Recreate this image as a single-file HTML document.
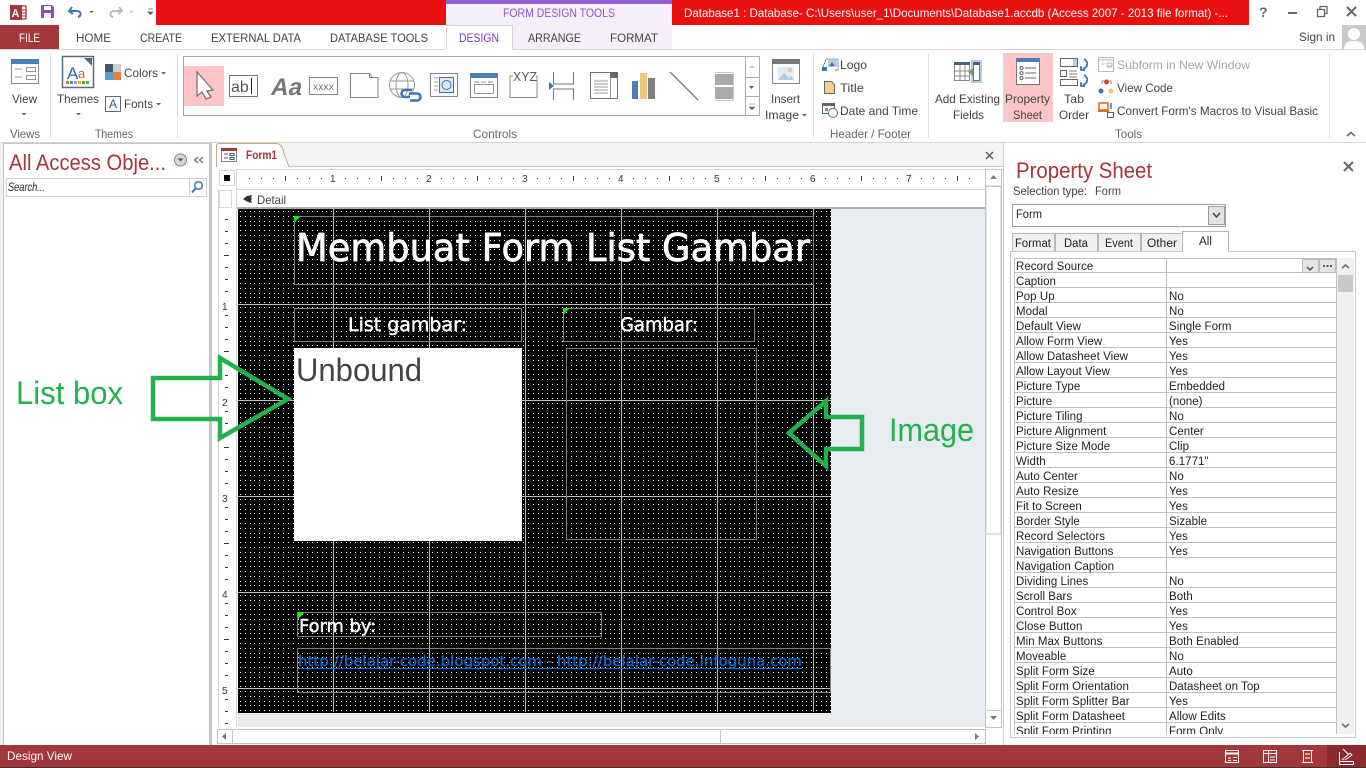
<!DOCTYPE html>
<html><head><meta charset="utf-8"><title>Access</title>
<style>
html,body{margin:0;padding:0;width:1366px;height:768px;overflow:hidden;background:#fff}
svg{display:block}
text{font-family:"Liberation Sans",sans-serif;font-size:12px;fill:#444}
.c{font-family:"DejaVu Sans",sans-serif;fill:#fff;stroke:#fff;stroke-width:.45}
.p{fill:#222;font-size:11.5px;letter-spacing:.05px}
.l{fill:#666}
.n{fill:none;stroke:#777;stroke-width:1}
</style></head><body>
<svg width="1366" height="768" viewBox="0 0 1366 768" xmlns="http://www.w3.org/2000/svg">
<defs>
<pattern id="dots" x="238" y="209" width="24" height="24" patternUnits="userSpaceOnUse">
<rect width="24" height="24" fill="#000"/>
<g fill="#fff" shape-rendering="crispEdges">
<rect x="2" y="2" width="1" height="1"/><rect x="7" y="2" width="1" height="1"/><rect x="12" y="2" width="1" height="1"/><rect x="16" y="2" width="1" height="1"/><rect x="21" y="2" width="1" height="1"/>
<rect x="2" y="7" width="1" height="1"/><rect x="7" y="7" width="1" height="1"/><rect x="12" y="7" width="1" height="1"/><rect x="16" y="7" width="1" height="1"/><rect x="21" y="7" width="1" height="1"/>
<rect x="2" y="12" width="1" height="1"/><rect x="7" y="12" width="1" height="1"/><rect x="12" y="12" width="1" height="1"/><rect x="16" y="12" width="1" height="1"/><rect x="21" y="12" width="1" height="1"/>
<rect x="2" y="16" width="1" height="1"/><rect x="7" y="16" width="1" height="1"/><rect x="12" y="16" width="1" height="1"/><rect x="16" y="16" width="1" height="1"/><rect x="21" y="16" width="1" height="1"/>
<rect x="2" y="21" width="1" height="1"/><rect x="7" y="21" width="1" height="1"/><rect x="12" y="21" width="1" height="1"/><rect x="16" y="21" width="1" height="1"/><rect x="21" y="21" width="1" height="1"/>
</g>
</pattern>
<clipPath id="pc"><rect x="1014" y="258" width="340" height="476"/></clipPath>
</defs>

<!-- title bar -->
<rect x="156" y="0" width="1093" height="25" fill="#eb1010"/>
<rect x="446" y="0" width="226" height="25" fill="#f4effb"/>
<rect x="446" y="0" width="226" height="4" fill="#9160d2"/>
<text x="503" y="17" textLength="112" lengthAdjust="spacingAndGlyphs" font-size="12" style="fill:#8a55d0">FORM DESIGN TOOLS</text>
<text x="684" y="17" textLength="544" lengthAdjust="spacingAndGlyphs" style="fill:#fff">Database1 : Database- C:\Users\user_1\Documents\Database1.accdb (Access 2007 - 2013 file format) -...</text>
<!-- access logo -->
<path d="M18 6h8v13h-8z" fill="#fff" stroke="#a4373a" stroke-width="1.300"/><path d="M19 10h7M19 13h7M19 16h7" stroke="#a4373a"/>
<rect x="10" y="5" width="12" height="15" fill="#a4373a"/>
<text x="11.500" y="17" style="fill:#fff;font-size:11px;font-weight:bold">A</text>
<!-- save -->
<path d="M41 5h11l2 2v11H41z" fill="#8a55b0"/><rect x="44" y="6" width="7" height="4" fill="#fff"/><rect x="44" y="13" width="7" height="5" fill="#f4effb"/>
<!-- undo redo -->
<path d="M72 7l-3 4 4 3M70 11h7c4 0 5 5 1 6" fill="none" stroke="#3a76b4" stroke-width="2"/>
<path d="M89 11h5l-2.500 2z" fill="#666"/>
<path d="M119 7l3 4-4 3M121 11h-7c-4 0-5 5-1 6" fill="none" stroke="#bbb" stroke-width="2"/>
<path d="M129 11h5l-2.500 2z" fill="#bbb"/>
<path d="M148 9h5M148 12h5l-2.500 2.500z" fill="#666" stroke="#666" stroke-width=".8"/>
<!-- window controls -->
<text x="1259" y="17" style="font-size:14px;font-weight:bold;fill:#666">?</text>
<rect x="1288" y="12" width="9" height="2" fill="#666"/>
<path d="M1317.500 9.500h7v7h-7zM1320 9v-2.500h7v7h-2" fill="none" stroke="#666" stroke-width="1.300"/>
<path d="M1347 7l9 9M1356 7l-9 9" stroke="#666" stroke-width="2"/>

<!-- tabs -->
<rect x="0" y="25" width="59" height="25" fill="#a4373a"/>
<text x="19" y="42" textLength="21" lengthAdjust="spacingAndGlyphs" style="fill:#fff">FILE</text>
<rect x="512" y="25" width="160" height="24" fill="#f4effb"/>
<path d="M446.500 25v24" stroke="#d4d4d4" fill="none"/>
<path d="M0 49.500h446.500M512.500 49.500H1366" stroke="#d4d4d4" fill="none"/>
<path d="M512.500 25v25M446.500 25.500h66" stroke="#d4d4d4" fill="none"/>
<text x="76" y="42" textLength="35" lengthAdjust="spacingAndGlyphs">HOME</text>
<text x="140" y="42" textLength="42" lengthAdjust="spacingAndGlyphs">CREATE</text>
<text x="211" y="42" textLength="90" lengthAdjust="spacingAndGlyphs">EXTERNAL DATA</text>
<text x="330" y="42" textLength="98" lengthAdjust="spacingAndGlyphs">DATABASE TOOLS</text>
<text x="459" y="42" textLength="40" lengthAdjust="spacingAndGlyphs" style="fill:#7a3fc4">DESIGN</text>
<text x="528" y="42" textLength="53" lengthAdjust="spacingAndGlyphs">ARRANGE</text>
<text x="610" y="42" textLength="48" lengthAdjust="spacingAndGlyphs">FORMAT</text>
<text x="1299" y="41" textLength="36" lengthAdjust="spacingAndGlyphs">Sign in</text>
<rect x="1342" y="25" width="24" height="24" fill="#c9c9c9"/>
<circle cx="1354" cy="34" r="6" fill="#fff"/><path d="M1344 49c0-7 5-8 10-8s10 1 10 8z" fill="#fff"/>

<!-- ribbon -->
<path d="M0 142.500h1366" stroke="#d4d4d4" fill="none"/>
<path d="M50.500 54v84M177.500 54v84M813.500 54v84M928.500 54v84M1329.500 54v84" stroke="#e2e2e2" fill="none"/>
<!-- view -->
<rect x="11.500" y="59.500" width="27" height="24" fill="#fff" stroke="#888"/><rect x="11" y="59" width="28" height="5" fill="#4a7fb8"/>
<path d="M15 69h7M15 77h7M26.500 67.500h9v4h-9zM26.500 75.500h9v4h-9z" fill="none" stroke="#999"/>
<text x="12" y="103" textLength="25" lengthAdjust="spacingAndGlyphs">View</text>
<path d="M21.500 113h5l-2.500 2.500z" fill="#666"/>
<text x="10" y="138" textLength="30" lengthAdjust="spacingAndGlyphs" class="l">Views</text>
<!-- themes -->
<rect x="62.500" y="56.500" width="31" height="31" fill="#fff" stroke="#5a6a80" stroke-width="1.500"/>
<path d="M84 58h8v8z" fill="#5a6a80"/>
<text x="67" y="79" style="font-size:17px;fill:#2a6ab0">A</text><text x="78" y="78" style="font-size:13px;fill:#c8641e">a</text>
<g><rect x="66" y="81" width="3" height="3" fill="#e07020"/><rect x="70" y="81" width="3" height="3" fill="#4a90d0"/><rect x="74" y="81" width="3" height="3" fill="#a0a0a0"/><rect x="78" y="81" width="3" height="3" fill="#f0b020"/><rect x="82" y="81" width="3" height="3" fill="#70a040"/><rect x="86" y="81" width="3" height="3" fill="#60a050"/></g>
<text x="57" y="103" textLength="42" lengthAdjust="spacingAndGlyphs">Themes</text>
<path d="M76 113h5l-2.500 2.500z" fill="#666"/>
<rect x="105" y="64" width="8" height="8" fill="#44546a"/><rect x="113" y="64" width="8" height="8" fill="#d0d0d0"/><rect x="105" y="72" width="8" height="8" fill="#5b9bd5"/><rect x="113" y="72" width="8" height="8" fill="#ed7d31"/>
<text x="124" y="77" textLength="34" lengthAdjust="spacingAndGlyphs">Colors</text><path d="M161 72h5l-2.500 2.500z" fill="#666"/>
<rect x="105.500" y="96.500" width="15" height="15" fill="#fff" stroke="#5a6a80"/><text x="109" y="108" style="font-size:12px;fill:#2a5a90">A</text>
<text x="124" y="108" textLength="29" lengthAdjust="spacingAndGlyphs">Fonts</text><path d="M156 103h5l-2.500 2.500z" fill="#666"/>
<text x="95" y="138" textLength="38" lengthAdjust="spacingAndGlyphs" class="l">Themes</text>

<!-- gallery -->
<rect x="183.500" y="56.500" width="576" height="59" fill="#fff" stroke="#ababab"/>
<rect x="184" y="66" width="40" height="40" fill="#fec5c6"/>
<path d="M197 72v24l5-4 4 7 5-2-4-6 6-1z" fill="#fff" stroke="#777" stroke-width="1.300"/>
<rect x="229.500" y="75.500" width="28" height="21" fill="#fff" stroke="#777"/><text x="231" y="92" style="font-size:16px;fill:#555">ab</text><path d="M251.500 78v16" stroke="#222"/>
<text transform="translate(270 95) skewX(-12)" x="0" y="0" style="font-size:24px;font-weight:bold;fill:#777">Aa</text>
<rect x="309.500" y="77.500" width="28" height="17" fill="#fff" stroke="#888"/><text x="313" y="90" textLength="21" lengthAdjust="spacingAndGlyphs" style="font-size:10px;fill:#777">xxxx</text>
<path d="M350.500 97.500v-24h19l3 4h5.500v20zM369.500 73.500v4h8" fill="#fff" stroke="#888"/>
<circle cx="402" cy="85" r="12.500" fill="#fff" stroke="#999"/><ellipse cx="402" cy="85" rx="6" ry="12.500" fill="none" stroke="#999"/><path d="M390 81h24M390 89h24" stroke="#999" fill="none"/>
<path d="M410 97h-5a3.500 3.500 0 0 1 0-7h7M409 93.500h8a3.500 3.500 0 0 1 0 7h-7" fill="none" stroke="#3a76b4" stroke-width="2.500"/>
<rect x="430.500" y="73.500" width="27" height="23" fill="#fff" stroke="#888"/><rect x="439.500" y="77.500" width="14" height="15" fill="#dce8f4" stroke="#3a76b4"/><circle cx="446.500" cy="85" r="4.500" fill="none" stroke="#3a76b4"/><path d="M434 78h4M434 82h4M434 86h4M434 90h4" stroke="#999"/>
<rect x="470.500" y="73.500" width="27" height="24" fill="#fff" stroke="#888"/><rect x="470" y="73" width="28" height="5" fill="#4a7fb8"/><path d="M474 82h20" stroke="#999" stroke-dasharray="5 2"/><rect x="474.500" y="84.500" width="19" height="9" fill="none" stroke="#999"/>
<path d="M513 76h-3v21.500h27V76h-1" fill="none" stroke="#888"/><text x="513" y="81" textLength="24" lengthAdjust="spacingAndGlyphs" style="font-size:13px;fill:#555">XYZ</text>
<path d="M553.500 72v12h20V72M553.500 100V89h20v11" fill="none" stroke="#777"/><path d="M549 82l5 4-5 4z" fill="#3a76b4"/>
<rect x="590.500" y="72.500" width="27" height="26" fill="#fff" stroke="#777"/><rect x="610" y="72" width="8" height="6" fill="#666"/><path d="M610.500 78v20M594 81h14M594 84h14M594 87h14M594 90h14M594 93h14" stroke="#999" fill="none"/>
<rect x="632" y="81" width="6" height="18" fill="#4a7fb8"/><rect x="640" y="73" width="7" height="26" fill="#eac77d"/><rect x="648" y="78" width="7" height="21" fill="#808080"/>
<path d="M670 72l28 28" stroke="#666" stroke-width="1.200"/>
<rect x="715" y="74" width="18" height="11" fill="#aaa"/><rect x="715" y="87" width="18" height="12" fill="#aaa"/><path d="M714.500 72.500h19v28h-19" fill="none" stroke="#ccc"/>
<path d="M745.500 56v59M745.500 77.500h14M745.500 96.500h14" stroke="#ababab" fill="none"/>
<path d="M749 68l3-3 3 3z" fill="#ccc"/><path d="M749 86h5l-2.500 3z" fill="#666"/><path d="M749 104h6M749 107h6l-3 3z" fill="#666" stroke="#666" stroke-width=".5"/>
<text x="473" y="138" textLength="44" lengthAdjust="spacingAndGlyphs" class="l">Controls</text>
<!-- insert image -->
<rect x="772.500" y="59.500" width="27" height="24" fill="#fff" stroke="#888"/><rect x="772" y="59" width="28" height="5" fill="#777"/>
<rect x="778" y="67" width="16" height="13" fill="#e2ebf3"/><circle cx="790" cy="70" r="2" fill="#eac77d"/><path d="M778 80l6-7 5 5 2-2 3 4z" fill="#b4cbe0"/>
<text x="771" y="103" textLength="29" lengthAdjust="spacingAndGlyphs">Insert</text>
<text x="765" y="119" textLength="34" lengthAdjust="spacingAndGlyphs">Image</text><path d="M802 114h5l-2.500 2.500z" fill="#666"/>
<!-- header/footer -->
<path d="M822 70l4-11h12v11l-4 0" fill="#fff" stroke="#666" stroke-dasharray="2 1"/><rect x="828" y="59" width="10" height="8" fill="#b4cbe0"/><path d="M829 66l3-4 3 4z" fill="#3a76b4"/><rect x="822" y="67" width="5" height="4" fill="#3a76b4"/>
<text x="840" y="69" textLength="27" lengthAdjust="spacingAndGlyphs">Logo</text>
<path d="M824.500 81.500h7l3 3v9h-10z" fill="#f3cf8f" stroke="#666"/>
<text x="840" y="92" textLength="24" lengthAdjust="spacingAndGlyphs">Title</text>
<rect x="822.500" y="103.500" width="12" height="10" fill="#fff" stroke="#666"/><rect x="822" y="103" width="13" height="3" fill="#666"/><rect x="825" y="108" width="3" height="3" fill="#e07020"/><circle cx="833" cy="113" r="4.500" fill="#fff" stroke="#3a76b4"/>
<text x="840" y="115" textLength="78" lengthAdjust="spacingAndGlyphs">Date and Time</text>
<text x="830" y="138" textLength="81" lengthAdjust="spacingAndGlyphs" class="l">Header / Footer</text>
<!-- tools -->
<rect x="954.500" y="62.500" width="15" height="18" fill="#fff" stroke="#888"/><rect x="954" y="62" width="16" height="3" fill="#44618a"/><path d="M954 71h16M954 76h16M960 65v16M965 65v16" stroke="#888" fill="none"/>
<rect x="971" y="60" width="11" height="23" fill="#b4cbe0"/><rect x="973.500" y="62.500" width="6" height="18" fill="#fff" stroke="#777"/><rect x="973" y="62" width="7" height="3" fill="#44618a"/>
<path d="M973 68l-5 4 5 4z" fill="#70a080"/>
<text x="935" y="103" textLength="65" lengthAdjust="spacingAndGlyphs">Add Existing</text>
<text x="953" y="119" textLength="31" lengthAdjust="spacingAndGlyphs">Fields</text>
<rect x="1003" y="53" width="50" height="69" fill="#fec5c6"/>
<rect x="1016.500" y="58.500" width="23" height="26" fill="#fff" stroke="#777"/><rect x="1016" y="58" width="24" height="4" fill="#4a7fb8"/>
<circle cx="1021.500" cy="68" r="1.500" fill="none" stroke="#666"/><circle cx="1021.500" cy="73" r="1.500" fill="none" stroke="#666"/><circle cx="1021.500" cy="78" r="1.500" fill="none" stroke="#666"/><path d="M1025 68h11M1025 73h11M1025 78h11" stroke="#666" fill="none"/>
<text x="1005" y="103" textLength="45" lengthAdjust="spacingAndGlyphs">Property</text>
<text x="1013" y="119" textLength="29" lengthAdjust="spacingAndGlyphs">Sheet</text>
<rect x="1060.500" y="58.500" width="17" height="8" fill="#fff" stroke="#666"/><rect x="1073" y="59" width="4" height="7" fill="#b4cbe0"/><rect x="1060.500" y="70.500" width="6" height="6" fill="#fff" stroke="#666"/><path d="M1069 71h8M1069 74h8M1069 77h8" stroke="#777"/><rect x="1060.500" y="79.500" width="17" height="6" fill="#fff" stroke="#666"/>
<path d="M1084 59c5 3 4 8-1 10M1081 66v4h4M1084 75c5 3 4 8-1 10M1081 82v4h4" fill="none" stroke="#3a76b4" stroke-width="1.800"/>
<text x="1064" y="103" textLength="20" lengthAdjust="spacingAndGlyphs">Tab</text>
<text x="1059" y="119" textLength="30" lengthAdjust="spacingAndGlyphs">Order</text>
<rect x="1098.500" y="57.500" width="15" height="14" fill="#fff" stroke="#bbb"/><path d="M1098 60h16M1101 64h4M1107 63h5v3h-5zM1107 67h5" stroke="#bbb" fill="none"/>
<text x="1117" y="69" textLength="133" lengthAdjust="spacingAndGlyphs" style="fill:#a6a6a6">Subform in New Window</text>
<path d="M1102 84v-3h9v3" fill="none" stroke="#888"/><circle cx="1106.500" cy="82" r="2.500" fill="#d0492a"/><circle cx="1101" cy="91" r="2.500" fill="#3a76b4"/><circle cx="1111" cy="91" r="2.500" fill="#eac77d"/>
<text x="1117" y="92" textLength="56" lengthAdjust="spacingAndGlyphs">View Code</text>
<rect x="1099" y="103" width="9" height="7" fill="none" stroke="#e07020" stroke-width="1.600"/><rect x="1098" y="110" width="11" height="2" fill="#e07020"/><rect x="1107.500" y="112.500" width="6" height="5" fill="#fff" stroke="#44618a"/><path d="M1111 103v6" stroke="#3a76b4" stroke-width="1.500"/>
<text x="1117" y="115" textLength="201" lengthAdjust="spacingAndGlyphs">Convert Form's Macros to Visual Basic</text>
<text x="1115" y="138" textLength="27" lengthAdjust="spacingAndGlyphs" class="l">Tools</text>
<path d="M1347 136l4-3.500 4 3.500" fill="none" stroke="#666" stroke-width="1.500"/>

<!-- nav pane -->
<rect x="0" y="143" width="1366" height="602" fill="#f1f1f1"/>
<rect x="3.500" y="143.500" width="206" height="602" fill="#fff" stroke="#c6c6c6"/>
<rect x="210" y="143" width="2" height="602" fill="#c6c6c6"/>
<rect x="212" y="143" width="4" height="602" fill="#fff"/>
<text x="9" y="170" textLength="157" lengthAdjust="spacingAndGlyphs" style="font-size:22px;fill:#a4373a">All Access Obje...</text>
<circle cx="180.500" cy="160" r="6" fill="#d8d8d8" stroke="#888"/><path d="M177.500 158.500h6l-3 3z" fill="#555"/>
<path d="M198 157l-3.500 3 3.500 3M203 157l-3.500 3 3.500 3" fill="none" stroke="#666" stroke-width="1.200"/>
<rect x="6.500" y="178.500" width="200" height="18" fill="#fff" stroke="#d0d0d0"/><path d="M189.500 178v18" stroke="#d0d0d0"/>
<text x="8" y="191" textLength="37" lengthAdjust="spacingAndGlyphs" style="font-style:italic;font-size:11.500px;fill:#222">Search...</text>
<circle cx="198.500" cy="185.500" r="3.800" fill="none" stroke="#3a76b4" stroke-width="1.500"/><path d="M195.500 188.500l-3.500 4" stroke="#3a76b4" stroke-width="2"/>

<!-- document area -->
<rect x="216" y="143" width="787" height="602" fill="#fff"/>
<rect x="216" y="143" width="787" height="24" fill="#f4f4f4"/>
<path d="M216 166.500h787" stroke="#c6c6c6" fill="none"/>
<path d="M216.500 167v-21q0-2.500 3-2.500h56c5 0 7 3 8.500 10l5 13.500" fill="#fff" stroke="#c0a888"/>
<rect x="221.500" y="148.500" width="15" height="13" fill="#fff" stroke="#888"/><rect x="221" y="148" width="16" height="3" fill="#a4373a"/><path d="M224 154h4M224 158h4M230 153.500h4v2h-4zM230 157.500h4v2h-4z" stroke="#44618a" fill="none"/>
<text x="246" y="159" textLength="31" lengthAdjust="spacingAndGlyphs" style="fill:#a4373a;font-weight:bold;font-size:11.500px">Form1</text>
<path d="M986 152l7 7M993 152l-7 7" stroke="#555" stroke-width="1.400"/>

<!-- ruler -->
<rect x="219.500" y="170.500" width="15" height="15" fill="#fff" stroke="#d6d6d6"/><rect x="224" y="175" width="6" height="6" fill="#000"/>
<rect x="236.500" y="169.500" width="749" height="20" fill="#fff" stroke="#d6d6d6"/>
<g fill="#444">
<rect x="249" y="178" width="1" height="1"/><rect x="261" y="178" width="1" height="1"/><rect x="273" y="178" width="1" height="1"/><rect x="285" y="176" width="1" height="5"/><rect x="297" y="178" width="1" height="1"/><rect x="309" y="178" width="1" height="1"/><rect x="321" y="178" width="1" height="1"/>
<rect x="345" y="178" width="1" height="1"/><rect x="357" y="178" width="1" height="1"/><rect x="369" y="178" width="1" height="1"/><rect x="381" y="176" width="1" height="5"/><rect x="393" y="178" width="1" height="1"/><rect x="405" y="178" width="1" height="1"/><rect x="417" y="178" width="1" height="1"/>
<rect x="441" y="178" width="1" height="1"/><rect x="453" y="178" width="1" height="1"/><rect x="465" y="178" width="1" height="1"/><rect x="477" y="176" width="1" height="5"/><rect x="489" y="178" width="1" height="1"/><rect x="501" y="178" width="1" height="1"/><rect x="513" y="178" width="1" height="1"/>
<rect x="537" y="178" width="1" height="1"/><rect x="549" y="178" width="1" height="1"/><rect x="561" y="178" width="1" height="1"/><rect x="573" y="176" width="1" height="5"/><rect x="585" y="178" width="1" height="1"/><rect x="597" y="178" width="1" height="1"/><rect x="609" y="178" width="1" height="1"/>
<rect x="633" y="178" width="1" height="1"/><rect x="645" y="178" width="1" height="1"/><rect x="657" y="178" width="1" height="1"/><rect x="669" y="176" width="1" height="5"/><rect x="681" y="178" width="1" height="1"/><rect x="693" y="178" width="1" height="1"/><rect x="705" y="178" width="1" height="1"/>
<rect x="729" y="178" width="1" height="1"/><rect x="741" y="178" width="1" height="1"/><rect x="753" y="178" width="1" height="1"/><rect x="765" y="176" width="1" height="5"/><rect x="777" y="178" width="1" height="1"/><rect x="789" y="178" width="1" height="1"/><rect x="801" y="178" width="1" height="1"/>
<rect x="825" y="178" width="1" height="1"/><rect x="837" y="178" width="1" height="1"/><rect x="849" y="178" width="1" height="1"/><rect x="861" y="176" width="1" height="5"/><rect x="873" y="178" width="1" height="1"/><rect x="885" y="178" width="1" height="1"/><rect x="897" y="178" width="1" height="1"/>
<rect x="921" y="178" width="1" height="1"/><rect x="933" y="178" width="1" height="1"/><rect x="945" y="178" width="1" height="1"/><rect x="957" y="176" width="1" height="5"/><rect x="969" y="178" width="1" height="1"/>
</g>
<text x="330" y="182" style="font-size:10px;fill:#333">1</text><text x="426" y="182" style="font-size:10px;fill:#333">2</text><text x="522" y="182" style="font-size:10px;fill:#333">3</text><text x="618" y="182" style="font-size:10px;fill:#333">4</text><text x="714" y="182" style="font-size:10px;fill:#333">5</text><text x="810" y="182" style="font-size:10px;fill:#333">6</text><text x="906" y="182" style="font-size:10px;fill:#333">7</text>
<!-- vertical ruler -->
<path d="M218.500 190v537" stroke="#d6d6d6" fill="none"/>
<rect x="219.500" y="190.500" width="12" height="17" fill="#fff" stroke="#d6d6d6"/>
<path d="M236.500 190v537" stroke="#d6d6d6"/>
<g fill="#333" transform="translate(0 1)">
<rect x="225" y="218" width="3" height="1"/><rect x="225" y="230" width="3" height="1"/><rect x="225" y="242" width="3" height="1"/><rect x="224" y="254" width="5" height="1"/><rect x="225" y="266" width="3" height="1"/><rect x="225" y="278" width="3" height="1"/><rect x="225" y="290" width="3" height="1"/>
<rect x="225" y="314" width="3" height="1"/><rect x="225" y="326" width="3" height="1"/><rect x="225" y="338" width="3" height="1"/><rect x="224" y="350" width="5" height="1"/><rect x="225" y="362" width="3" height="1"/><rect x="225" y="374" width="3" height="1"/><rect x="225" y="386" width="3" height="1"/>
<rect x="225" y="410" width="3" height="1"/><rect x="225" y="422" width="3" height="1"/><rect x="225" y="434" width="3" height="1"/><rect x="224" y="446" width="5" height="1"/><rect x="225" y="458" width="3" height="1"/><rect x="225" y="470" width="3" height="1"/><rect x="225" y="482" width="3" height="1"/>
<rect x="225" y="506" width="3" height="1"/><rect x="225" y="518" width="3" height="1"/><rect x="225" y="530" width="3" height="1"/><rect x="224" y="542" width="5" height="1"/><rect x="225" y="554" width="3" height="1"/><rect x="225" y="566" width="3" height="1"/><rect x="225" y="578" width="3" height="1"/>
<rect x="225" y="602" width="3" height="1"/><rect x="225" y="614" width="3" height="1"/><rect x="225" y="626" width="3" height="1"/><rect x="224" y="638" width="5" height="1"/><rect x="225" y="650" width="3" height="1"/><rect x="225" y="662" width="3" height="1"/><rect x="225" y="674" width="3" height="1"/>
<rect x="225" y="698" width="3" height="1"/><rect x="225" y="710" width="3" height="1"/><rect x="225" y="722" width="3" height="1"/>
</g>
<text x="222" y="310" style="font-size:10px;fill:#333">1</text><text x="222" y="406" style="font-size:10px;fill:#333">2</text><text x="222" y="502" style="font-size:10px;fill:#333">3</text><text x="222" y="598" style="font-size:10px;fill:#333">4</text><text x="222" y="694" style="font-size:10px;fill:#333">5</text>

<!-- detail band -->
<rect x="237" y="190" width="748" height="18" fill="#fff"/>
<path d="M243 199l4-3 5-1-1 3 1 1-1 1 1 3-4-1-2-1z" fill="#333"/>
<text x="257" y="204" textLength="29" lengthAdjust="spacingAndGlyphs">Detail</text>
<rect x="237" y="207" width="748" height="2" fill="#b0b0b0"/>
<!-- form surface -->
<rect x="238" y="209" width="747" height="518" fill="#e8ebf0"/>
<rect x="238" y="209" width="593" height="504" fill="url(#dots)"/>
<path d="M333.500 209v503M429.500 209v503M525.500 209v503M621.500 209v503M717.500 209v503M813.500 209v503M238 304.500h593M238 400.500h593M238 496.500h593M238 592.500h593M238 688.500h593" stroke="#bdbdbd" fill="none"/>
<!-- controls -->
<g fill="none" stroke="#808080">
<rect x="294.500" y="216.500" width="519" height="68"/>
<rect x="294.500" y="308.500" width="227" height="33"/>
<rect x="563.500" y="308.500" width="191" height="33"/>
<rect x="566.500" y="348.500" width="190" height="191"/>
<rect x="297.500" y="612.500" width="304" height="24"/>
<rect x="297.500" y="648.500" width="533" height="44"/>
</g>
<path d="M294 216h7l-7 7zM563 308h7l-7 7zM298 612h7l-7 7z" fill="#1fe81f"/>
<text class="c" x="296" y="261" textLength="514" lengthAdjust="spacingAndGlyphs" style="font-size:38px;stroke-width:.7">Membuat Form List Gambar</text>
<text class="c" x="348" y="331" textLength="119" lengthAdjust="spacingAndGlyphs" style="font-size:19px">List gambar:</text>
<text class="c" x="620" y="331" textLength="78" lengthAdjust="spacingAndGlyphs" style="font-size:19px">Gambar:</text>
<rect x="294" y="348" width="228" height="193" fill="#fff"/>
<text x="296" y="381" textLength="126" lengthAdjust="spacingAndGlyphs" style="font-size:32px;fill:#444">Unbound</text>
<text class="c" x="299" y="632" textLength="77" lengthAdjust="spacingAndGlyphs" style="font-size:18px">Form by:</text>
<text class="c" x="298" y="666" textLength="504" lengthAdjust="spacingAndGlyphs" style="font-size:14px;fill:#1166cc;stroke:#1166cc;stroke-width:.35">http://belajar-code.blogspot.com - http://belajar-code.infoguna.com</text>
<path d="M298 668.500h504" stroke="#1166cc" fill="none"/>

<!-- annotation arrows -->
<path d="M153 378H220V358L288 399 220 438V419H153z" fill="none" stroke="#22b14c" stroke-width="4.500" stroke-linejoin="miter"/>
<path d="M789 433L826 401V417H862V449H826V466z" fill="none" stroke="#22b14c" stroke-width="4.500"/>
<text x="16" y="404" textLength="107" lengthAdjust="spacingAndGlyphs" style="font-size:32px;fill:#22b14c">List box</text>
<text x="889" y="441" textLength="85" lengthAdjust="spacingAndGlyphs" style="font-size:32px;fill:#22b14c">Image</text>

<!-- scrollbars -->
<rect x="985.500" y="169.500" width="16" height="558" fill="#fff" stroke="#c6c6c6"/>
<rect x="986" y="186" width="15" height="348" fill="#fff" stroke="#c6c6c6"/>
<path d="M990 179l3.500-4 3.500 4z" fill="#777"/><path d="M990 716h7l-3.500 4z" fill="#777"/>
<path d="M986 169.500h15M986 186.500h15M986 710.500h15" stroke="#c6c6c6"/>
<rect x="217.500" y="729.500" width="768" height="14" fill="#fff" stroke="#c6c6c6"/>
<rect x="232.500" y="729.500" width="488" height="14" fill="#fff" stroke="#c6c6c6"/>
<path d="M226 733v7l-4-3.500z" fill="#777"/><path d="M975 733v7l4-3.500z" fill="#777"/>

<!-- property sheet pane -->
<rect x="1003" y="143" width="363" height="602" fill="#fff"/>
<path d="M1003.500 143v602" stroke="#d0d0d0"/>
<text x="1016" y="178" textLength="136" lengthAdjust="spacingAndGlyphs" style="font-size:22px;fill:#a4373a">Property Sheet</text>
<path d="M1344 162l9 9M1353 162l-9 9" stroke="#666" stroke-width="2"/>
<text x="1013" y="195" textLength="74" lengthAdjust="spacingAndGlyphs" style="font-size:11.500px">Selection type:</text>
<text x="1095" y="195" textLength="26" lengthAdjust="spacingAndGlyphs" style="font-size:11.500px">Form</text>
<rect x="1012.500" y="204.500" width="213" height="22" fill="#fff" stroke="#a0a0a0"/>
<text x="1016" y="218" textLength="26" lengthAdjust="spacingAndGlyphs" class="p">Form</text>
<rect x="1208.500" y="206.500" width="16" height="18" fill="#e4e4e4" stroke="#999"/><path d="M1213 213l3.500 4 3.500-4" fill="none" stroke="#444" stroke-width="1.500"/>
<g fill="#f0f0f0" stroke="#b8b8b8">
<rect x="1012.500" y="233.500" width="42" height="18"/><rect x="1055.500" y="233.500" width="42" height="18"/><rect x="1098.500" y="233.500" width="42" height="18"/><rect x="1141.500" y="233.500" width="41" height="18"/>
</g>
<rect x="1010.500" y="251.500" width="345" height="486" fill="#fff" stroke="#c8c8c8"/>
<path d="M1182.500 251.500v-20h46v20" fill="#fff" stroke="#b8b8b8"/><rect x="1183" y="250" width="45" height="3" fill="#fff"/>
<text x="1015" y="247" textLength="36" lengthAdjust="spacingAndGlyphs" class="p">Format</text>
<text x="1064" y="247" textLength="24" lengthAdjust="spacingAndGlyphs" class="p">Data</text>
<text x="1105" y="247" textLength="28" lengthAdjust="spacingAndGlyphs" class="p">Event</text>
<text x="1147" y="247" textLength="30" lengthAdjust="spacingAndGlyphs" class="p">Other</text>
<text x="1199" y="245" textLength="13" lengthAdjust="spacingAndGlyphs" class="p">All</text>
<!-- grid -->
<g clip-path="url(#pc)">
<g stroke="#c0c0c0" fill="none">
<path d="M1014.500 258v476M1166.500 258v476M1336.500 258v476"/>
<path d="M1014 258.500h323M1014 272.500h323M1014 287.500h323M1014 302.500h323M1014 317.500h323M1014 332.500h323M1014 347.500h323M1014 362.500h323M1014 377.500h323M1014 392.500h323M1014 407.500h323M1014 422.500h323M1014 437.500h323M1014 452.500h323M1014 467.500h323M1014 482.500h323M1014 497.500h323M1014 512.500h323M1014 527.500h323M1014 542.500h323M1014 557.500h323M1014 572.500h323M1014 587.500h323M1014 602.500h323M1014 617.500h323M1014 632.500h323M1014 647.500h323M1014 662.500h323M1014 677.500h323M1014 692.500h323M1014 707.500h323M1014 722.500h323"/>
</g>
<text class="p" x="1016" y="270">Record Source</text>
<text class="p" x="1016" y="285">Caption</text>
<text class="p" x="1016" y="300">Pop Up</text><text class="p" x="1169" y="300">No</text>
<text class="p" x="1016" y="315">Modal</text><text class="p" x="1169" y="315">No</text>
<text class="p" x="1016" y="330">Default View</text><text class="p" x="1169" y="330">Single Form</text>
<text class="p" x="1016" y="345">Allow Form View</text><text class="p" x="1169" y="345">Yes</text>
<text class="p" x="1016" y="360">Allow Datasheet View</text><text class="p" x="1169" y="360">Yes</text>
<text class="p" x="1016" y="375">Allow Layout View</text><text class="p" x="1169" y="375">Yes</text>
<text class="p" x="1016" y="390">Picture Type</text><text class="p" x="1169" y="390">Embedded</text>
<text class="p" x="1016" y="405">Picture</text><text class="p" x="1169" y="405">(none)</text>
<text class="p" x="1016" y="420">Picture Tiling</text><text class="p" x="1169" y="420">No</text>
<text class="p" x="1016" y="435">Picture Alignment</text><text class="p" x="1169" y="435">Center</text>
<text class="p" x="1016" y="450">Picture Size Mode</text><text class="p" x="1169" y="450">Clip</text>
<text class="p" x="1016" y="465">Width</text><text class="p" x="1169" y="465">6.1771"</text>
<text class="p" x="1016" y="480">Auto Center</text><text class="p" x="1169" y="480">No</text>
<text class="p" x="1016" y="495">Auto Resize</text><text class="p" x="1169" y="495">Yes</text>
<text class="p" x="1016" y="510">Fit to Screen</text><text class="p" x="1169" y="510">Yes</text>
<text class="p" x="1016" y="525">Border Style</text><text class="p" x="1169" y="525">Sizable</text>
<text class="p" x="1016" y="540">Record Selectors</text><text class="p" x="1169" y="540">Yes</text>
<text class="p" x="1016" y="555">Navigation Buttons</text><text class="p" x="1169" y="555">Yes</text>
<text class="p" x="1016" y="570">Navigation Caption</text>
<text class="p" x="1016" y="585">Dividing Lines</text><text class="p" x="1169" y="585">No</text>
<text class="p" x="1016" y="600">Scroll Bars</text><text class="p" x="1169" y="600">Both</text>
<text class="p" x="1016" y="615">Control Box</text><text class="p" x="1169" y="615">Yes</text>
<text class="p" x="1016" y="630">Close Button</text><text class="p" x="1169" y="630">Yes</text>
<text class="p" x="1016" y="645">Min Max Buttons</text><text class="p" x="1169" y="645">Both Enabled</text>
<text class="p" x="1016" y="660">Moveable</text><text class="p" x="1169" y="660">No</text>
<text class="p" x="1016" y="675">Split Form Size</text><text class="p" x="1169" y="675">Auto</text>
<text class="p" x="1016" y="690">Split Form Orientation</text><text class="p" x="1169" y="690">Datasheet on Top</text>
<text class="p" x="1016" y="705">Split Form Splitter Bar</text><text class="p" x="1169" y="705">Yes</text>
<text class="p" x="1016" y="720">Split Form Datasheet</text><text class="p" x="1169" y="720">Allow Edits</text>
<text class="p" x="1016" y="735">Split Form Printing</text><text class="p" x="1169" y="735">Form Only</text>
</g>
<rect x="1302.500" y="259.500" width="16" height="13" fill="#e4e4e4" stroke="#bbb"/><path d="M1307 267l3 3 3-3" fill="none" stroke="#444" stroke-width="1.300"/>
<rect x="1319.500" y="259.500" width="16" height="13" fill="#e4e4e4" stroke="#bbb"/><path d="M1323 266h2M1326.500 266h2M1330 266h2" stroke="#333" stroke-width="1.500"/>
<rect x="1337" y="258" width="17" height="476" fill="#f0f0f0"/>
<rect x="1338" y="275" width="15" height="17" fill="#c8c8c8"/>
<path d="M1342 268l3.500-3 3.500 3M1342 724l3.500 3 3.500-3" fill="none" stroke="#666" stroke-width="1.500"/>

<!-- status bar -->
<rect x="0" y="745" width="1366" height="22" fill="#a4373a"/>
<rect x="0" y="767" width="1366" height="1" fill="#333"/>
<rect x="1327" y="745" width="39" height="22" fill="#8c2a2d"/>
<text x="7" y="760" textLength="65" lengthAdjust="spacingAndGlyphs" style="fill:#fff">Design View</text>
<g fill="none" stroke="#fff">
<rect x="1225.500" y="750.500" width="13" height="12"/><path d="M1225 753.500h14" stroke-width="2"/><path d="M1228 758h3M1228 760.500h3M1233 757.500h4M1233 760.500h4"/>
<rect x="1263.500" y="750.500" width="13" height="12"/><path d="M1263 753.500h14M1268.500 751v12M1270 757h5M1270 760h5"/>
<path d="M1303.500 750.500h8v12h-8zM1302 750.500h11M1302 762.500h11M1305 754h5M1305 758h5"/>
<path d="M1339.500 752v9M1339.500 761.500h14v3h-14zM1342 760l8-7 2 2-7 5M1343 749l5 5"/>
</g>
</svg>
</body></html>
